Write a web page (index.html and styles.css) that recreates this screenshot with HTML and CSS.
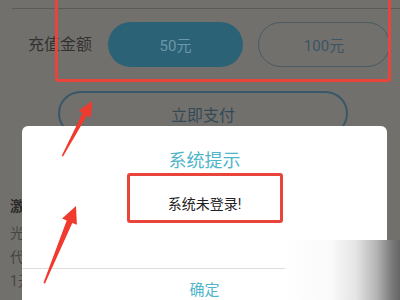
FILE: index.html
```html
<!DOCTYPE html>
<html lang="zh">
<head>
<meta charset="utf-8">
<link rel="stylesheet" href="styles.css">
</head>
<body>
<div class="page">
  <div class="rule"></div>
  <div class="amount-row">
    <span class="label">充值金额</span>
    <div class="pill pill-active">50元</div>
    <div class="pill pill-outline">100元</div>
  </div>
  <div class="pay">立即支付</div>
  <div class="list">
    <div class="list-title">激活码充值说明</div>
    <div class="list-line">光明会员充值</div>
    <div class="list-line">代金券说明</div>
    <div class="list-line">1元等于1点</div>
  </div>
</div>

<div class="dialog">
  <div class="dialog-title">系统提示</div>
  <div class="dialog-msg">系统未登录!</div>
  <div class="dialog-foot">确定</div>
  <div class="mark mark-msg"></div>
</div>

<div class="mark mark-top"></div>
<div class="fade"></div>

<svg class="arrows" width="400" height="300" viewBox="0 0 400 300">
  <polygon points="61.6,156 82.6,113 78.7,110.8 92,101 90.9,117.6 87,115.4 63,156.6" />
  <polygon points="43.4,283 66.7,220.5 62.1,218.6 76,206 76.9,224.8 72.3,222.9 45,283.6" />
</svg>
</body>
</html>
```

FILE: styles.css
```css
html, body {
  margin: 0;
  padding: 0;
}
body {
  width: 400px;
  height: 300px;
  overflow: hidden;
  position: relative;
  background: #72706d;
  font-family: Roboto, "Noto Sans CJK SC", sans-serif;
}
.page {
  padding-top: 8px;
}
.rule {
  margin-left: 12px;
  height: 1px;
  background: #5b5a58;
}
.amount-row {
  display: flex;
  align-items: center;
  margin-top: 13px;
  padding-left: 28px;
}
.label {
  font-size: 16px;
  line-height: 20px;
  color: #323231;
  width: 64px;
  margin-right: 16px;
  white-space: nowrap;
}
.pill {
  box-sizing: border-box;
  height: 45px;
  border-radius: 23px;
  display: flex;
  align-items: center;
  justify-content: center;
  font-size: 15px;
}
.pill-active {
  width: 135px;
  background: #2c6276;
  color: #6b98a8;
}
.pill-outline {
  width: 132px;
  margin-left: 15px;
  border: 1.5px solid #4a5a63;
  color: #3b5563;
}
.pay {
  box-sizing: border-box;
  margin: 24px 0 0 58px;
  width: 290px;
  height: 45px;
  border: 2px solid #385868;
  border-radius: 23px;
  display: flex;
  align-items: center;
  justify-content: center;
  font-size: 16px;
  color: #334a56;
}
.list {
  margin: 60px 0 0 10px;
  font-size: 14px;
}
.list-title {
  font-weight: bold;
  color: #2a2a2a;
  line-height: 20px;
  margin-bottom: 5px;
}
.list-line {
  color: #454545;
  line-height: 24px;
}
.dialog {
  position: absolute;
  left: 22px;
  top: 126px;
  width: 365px;
  height: 200px;
  background: #fff;
  border-radius: 6px;
  display: flex;
  flex-direction: column;
  align-items: center;
}
.dialog-title {
  margin-top: 23px;
  font-size: 18px;
  line-height: 24px;
  color: #4fb5c9;
}
.dialog-msg {
  margin-top: 21px;
  font-size: 14px;
  line-height: 20px;
  color: #222;
}
.dialog-foot {
  margin-top: 54px;
  align-self: stretch;
  border-top: 1px solid #dedede;
  padding-top: 11px;
  text-align: center;
  font-size: 15px;
  line-height: 20px;
  color: #4fb5c9;
}
.mark {
  position: absolute;
  box-sizing: border-box;
  border: 3px solid #e8443b;
  border-radius: 3px;
}
.mark-msg {
  left: 105px;
  top: 47px;
  width: 156px;
  height: 50px;
}
.mark-top {
  left: 55px;
  top: -6px;
  width: 336px;
  height: 88px;
}
.fade {
  position: absolute;
  left: 285px;
  top: 240px;
  width: 115px;
  height: 60px;
  background: linear-gradient(to right, #ffffff 0%, #fafafa 40%, #e4e4e4 62%, #b3b3b3 80%, #7a7a7a 93%, #656565 100%);
}
.arrows {
  position: absolute;
  left: 0;
  top: 0;
}
.arrows polygon {
  fill: #f03a2d;
}
```
